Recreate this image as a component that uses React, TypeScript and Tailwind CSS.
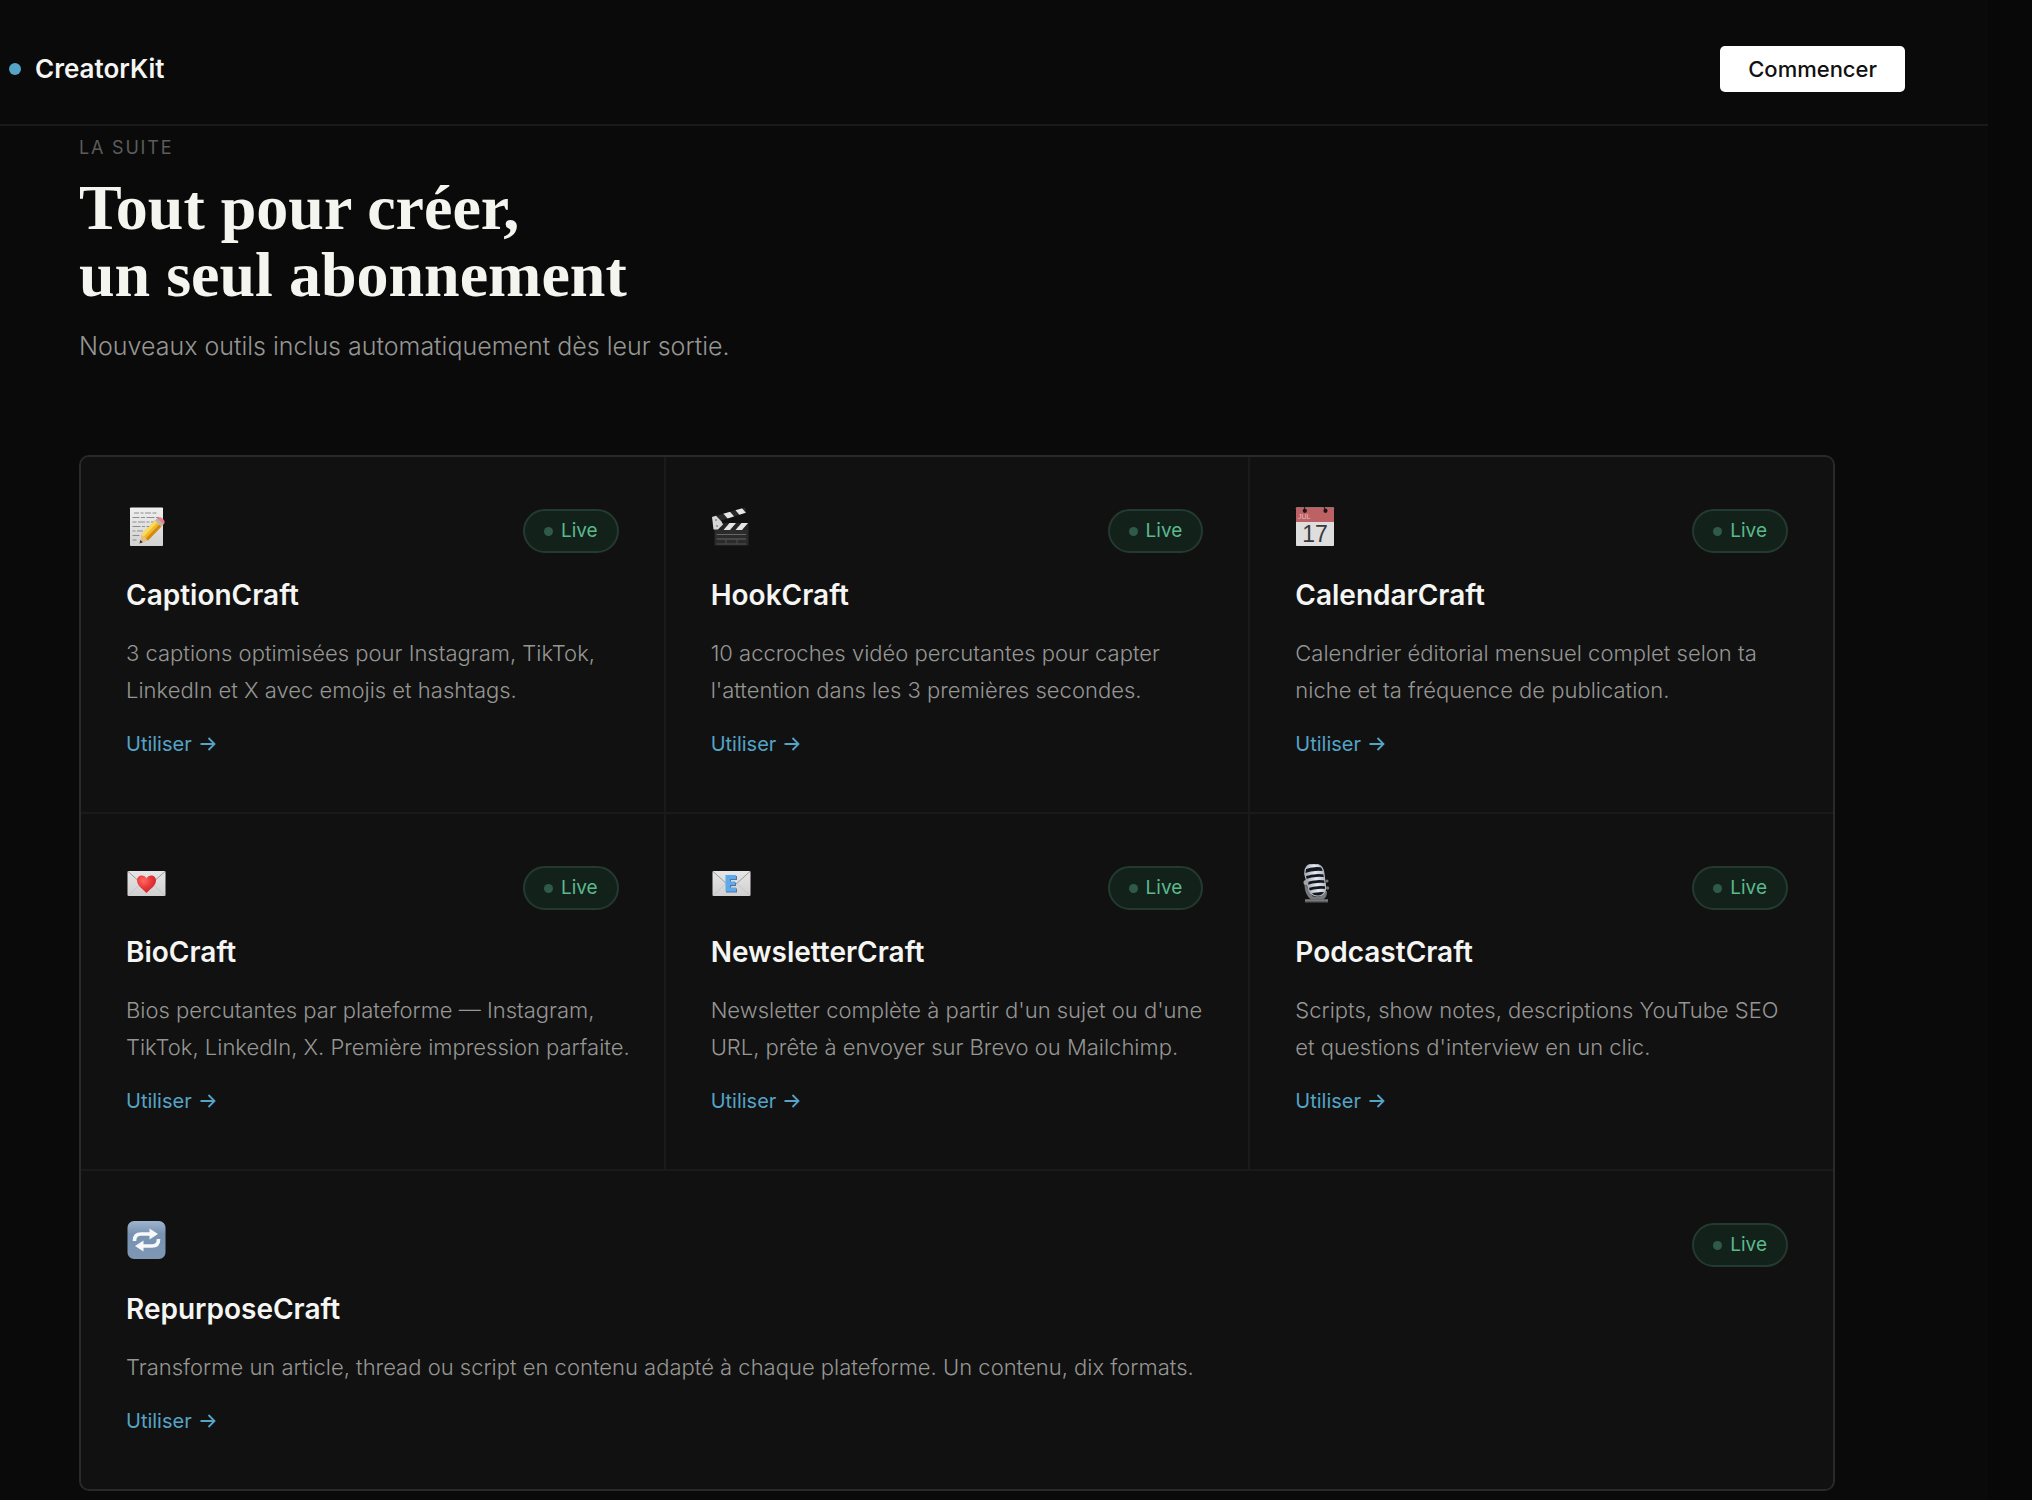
import type { ReactNode } from "react"

function MemoIcon() {
  return (
    <svg viewBox="0 0 40 40" className="h-10 w-10" aria-hidden="true">
      <defs>
        <linearGradient id="memo-paper" x1="0" y1="0" x2="0" y2="1">
          <stop offset="0" stopColor="#efefef" />
          <stop offset="1" stopColor="#d2d2d2" />
        </linearGradient>
      </defs>
      <rect x="4" y="0.5" width="33" height="38.5" rx="0.8" fill="url(#memo-paper)" />
      <g stroke="#8d8d8d" strokeWidth="1.1" fill="none">
        <path d="M8 6h5m1.500 0h3m1.500 0h6m1.500 0h4" />
        <path d="M6.500 10.500h7m1.500 0h4m1.500 0h8m1.500 0h3" />
        <path d="M6.500 15h4m1.500 0h7m1.500 0h3m1.500 0h5" />
        <path d="M6.500 19.500h8m1.500 0h3m1.500 0h4" />
        <path d="M6.500 24h3m1.500 0h6" />
        <path d="M6.500 28.500h7" />
        <path d="M6.500 33h4" />
      </g>
      <path d="M13.500 36.500l2-9 6.500 6z" fill="#e2bd86" />
      <path d="M13.500 36.500l.8-3.600 2.600 2.400z" fill="#333" />
      <path d="M15.500 27.500L29 13.500l6.500 6-13.500 14z" fill="#f2b92b" />
      <path d="M15.500 27.500L29 13.500l2.200 2-13.500 14z" fill="#fbdc55" />
      <path d="M19.800 31.500L33.300 17.500l2.200 2-13.500 14z" fill="#cf8a17" />
      <path d="M29 13.500l2-2 6.500 6-2 2z" fill="#b5b5b5" />
      <path d="M31 11.500c2-1.800 4-1.300 6 .500s2.200 4 .500 5.500z" fill="#ea7d85" />
    </svg>
  )
}

function ClapperIcon() {
  return (
    <svg viewBox="0 0 40 40" className="h-10 w-10" aria-hidden="true">
      <defs>
        <clipPath id="clap-top">
          <path d="M1 10L34 0.500l1.500 5L4 15.500z" />
        </clipPath>
        <clipPath id="clap-bottom">
          <path d="M3 16h34.500v7H3z" />
        </clipPath>
      </defs>
      <path d="M3.500 22.500h34v16h-34z" fill="#2c2b2b" />
      <path d="M1 10L34 0.500l1.500 5L4 15.500z" fill="#2a2a2a" />
      <g clipPath="url(#clap-top)" fill="#e6e6e6">
        <path d="M11 5l6.500-2 6 7-6.500 2z" />
        <path d="M23 1.500l6.500-2 6 7-6.500 2z" />
      </g>
      <path d="M3 16h34.500v7H3z" fill="#252525" />
      <g clipPath="url(#clap-bottom)" fill="#e6e6e6">
        <path d="M18.500 16h6.500l-6 7h-6.500z" />
        <path d="M30.500 16h6.500l-6 7h-6.500z" />
      </g>
      <path d="M1 10l4-1.200 5.500 5.700 1.500 3-5 5H2.500z" fill="#d7d7d7" />
      <circle cx="5" cy="13" r="1" fill="#888" />
      <circle cx="6" cy="19" r="1" fill="#888" />
      <path d="M5.500 27.500h29.500M5.500 32h29.500" stroke="#666" strokeWidth="1.2" />
      <path d="M15 32v4.500M26 32v4.500M5.500 37h29.500" stroke="#505050" strokeWidth="1" />
    </svg>
  )
}

function CalendarIcon() {
  return (
    <svg viewBox="0 0 40 40" className="h-10 w-10" aria-hidden="true">
      <rect x="1" y="0.500" width="38" height="38.500" rx="0.800" fill="#dedede" />
      <path d="M1 1.300q0-.8.8-.8h36.400q.8 0 .8.8V15H1z" fill="#bd6264" />
      <path d="M9.500 0v3M29 0l1.500 3" stroke="#3a1d1d" strokeWidth="1.200" />
      <circle cx="9.800" cy="3.800" r="2.100" fill="#1c1414" />
      <circle cx="30.500" cy="3.800" r="2.100" fill="#1c1414" />
      <text x="3" y="12" fontFamily="'Liberation Sans', sans-serif" fontSize="7" fill="#e8bcbc">
        JUL
      </text>
      <text x="20" y="35" textAnchor="middle" fontFamily="'Liberation Sans', sans-serif" fontSize="23" fill="#393939">
        17
      </text>
    </svg>
  )
}

function EnvelopeBase({ id, children }: { id: string; children: ReactNode }) {
  return (
    <svg viewBox="0 0 40 40" className="h-10 w-10" aria-hidden="true">
      <defs>
        <linearGradient id={id} x1="0" y1="0" x2="0" y2="1">
          <stop offset="0" stopColor="#e6e6e6" />
          <stop offset="1" stopColor="#d0d0d0" />
        </linearGradient>
      </defs>
      <rect x="1.500" y="7" width="38" height="25" rx="1" fill={`url(#${id})`} />
      <path d="M2 7.500L16.500 20.500q4 3 8 0L39 7.500" fill="none" stroke="#9b9b9b" strokeWidth="1" />
      <path d="M2 31.500L14.500 20M39 31.500L26.500 20" fill="none" stroke="#c0c0c0" strokeWidth="0.700" />
      {children}
    </svg>
  )
}

function LoveLetterIcon() {
  return (
    <EnvelopeBase id="love-paper">
      <defs>
        <radialGradient id="love-heart" cx="0.350" cy="0.300" r="0.800">
          <stop offset="0" stopColor="#ff6a62" />
          <stop offset="0.500" stopColor="#e9383a" />
          <stop offset="1" stopColor="#c3232b" />
        </radialGradient>
      </defs>
      <path
        d="M20.500 29C16.500 25 11 21.500 11 16.500c0-6 7.500-6.700 9.500-2 2-4.700 9.500-4 9.500 2C30 21.500 24.500 25 20.500 29z"
        fill="url(#love-heart)"
      />
    </EnvelopeBase>
  )
}

function EmailIcon() {
  return (
    <EnvelopeBase id="email-paper">
      <path d="M15 12h11v4h-6v2.500h5v3.500h-5v2.500h6v4H15z" fill="#56739c" />
      <path d="M14.500 11h10.500v4h-6v2.500h5v3.500h-5v2.500h6v4H14.500z" fill="#5fa8ec" />
    </EnvelopeBase>
  )
}

function MicIcon() {
  return (
    <svg viewBox="0 0 40 40" className="h-10 w-10" aria-hidden="true">
      <defs>
        <clipPath id="mic-head">
          <path d="M8 11C7 3 11 0 17 0s9 3 9.800 9l1.700 13c.7 6-2.500 10-7.500 10s-9-3-9.800-9z" />
        </clipPath>
        <linearGradient id="mic-metal" x1="0" y1="0" x2="1" y2="0">
          <stop offset="0" stopColor="#9aa0aa" />
          <stop offset="0.500" stopColor="#e6ecf6" />
          <stop offset="1" stopColor="#a5acb8" />
        </linearGradient>
      </defs>
      <g transform="translate(2 0)">
        <path d="M8 35.500h23v3H8z" fill="#5c5c5c" />
        <path d="M8 35.500h23v1.200H8z" fill="#8a8a8a" />
        <path d="M8 17c-1.500 7 1 15 6 18.500h12c3.500-2 4-5 4-8l-3-2-4 7h-7l-5-8z" fill="#74777b" />
        <g clipPath="url(#mic-head)">
          <path d="M6 0h25v33H6z" fill="#15171b" />
          <g stroke="url(#mic-metal)" strokeWidth="3.200" fill="none">
            <path d="M6 4.500q11-5 22-2" />
            <path d="M7 11q10-4 22-2" />
            <path d="M8 17q10-4 22-2" />
            <path d="M9 23q10-4 22-2" />
            <path d="M10 29q10-4 22-2" />
          </g>
        </g>
        <path
          d="M8 11C7 3 11 0 17 0s9 3 9.800 9l1.700 13c.7 6-2.500 10-7.500 10s-9-3-9.800-9z"
          fill="none"
          stroke="#b4bac3"
          strokeWidth="1.200"
        />
        <circle cx="9" cy="18.500" r="2.500" fill="#a3a5a8" />
        <circle cx="30" cy="17" r="1.500" fill="#777" />
        <circle cx="30.500" cy="24" r="1.700" fill="#777" />
      </g>
    </svg>
  )
}

function RepeatIcon() {
  return (
    <svg viewBox="0 0 40 40" className="h-10 w-10" aria-hidden="true">
      <defs>
        <linearGradient id="repeat-bg" x1="0" y1="0" x2="0" y2="1">
          <stop offset="0" stopColor="#9db4cd" />
          <stop offset="0.350" stopColor="#7892b2" />
          <stop offset="1" stopColor="#7f97b5" />
        </linearGradient>
      </defs>
      <rect x="1.500" y="0" width="38" height="38" rx="6.500" fill="url(#repeat-bg)" />
      <path d="M8.500 20v-.5q0-6.500 6.500-6.500h9.500" fill="none" stroke="#f6f8fa" strokeWidth="3.600" />
      <path d="M23.500 7.500l8.500 5.500-8.500 5.500z" fill="#f6f8fa" />
      <path d="M32.500 18v.5q0 6.500-6.500 6.500h-9.500" fill="none" stroke="#f6f8fa" strokeWidth="3.600" />
      <path d="M17.500 19.500L9 25l8.500 5.500z" fill="#f6f8fa" />
    </svg>
  )
}

const tools = [
  {
    name: "CaptionCraft",
    icon: <MemoIcon />,
    lines: ["3 captions optimisées pour Instagram, TikTok,", "LinkedIn et X avec emojis et hashtags."],
  },
  {
    name: "HookCraft",
    icon: <ClapperIcon />,
    lines: ["10 accroches vidéo percutantes pour capter", "l'attention dans les 3 premières secondes."],
  },
  {
    name: "CalendarCraft",
    icon: <CalendarIcon />,
    lines: ["Calendrier éditorial mensuel complet selon ta", "niche et ta fréquence de publication."],
  },
  {
    name: "BioCraft",
    icon: <LoveLetterIcon />,
    lines: ["Bios percutantes par plateforme — Instagram,", "TikTok, LinkedIn, X. Première impression parfaite."],
  },
  {
    name: "NewsletterCraft",
    icon: <EmailIcon />,
    lines: ["Newsletter complète à partir d'un sujet ou d'une", "URL, prête à envoyer sur Brevo ou Mailchimp."],
  },
  {
    name: "PodcastCraft",
    icon: <MicIcon />,
    lines: ["Scripts, show notes, descriptions YouTube SEO", "et questions d'interview en un clic."],
  },
  {
    name: "RepurposeCraft",
    icon: <RepeatIcon />,
    lines: ["Transforme un article, thread ou script en contenu adapté à chaque plateforme. Un contenu, dix formats."],
    wide: true,
  },
]

function LiveBadge() {
  return (
    <span className="flex h-11 items-center gap-2 rounded-full border-2 border-[#243a31] bg-[#13211b] px-[19px] text-[19px] text-[#5bb98c]">
      <span className="h-[9px] w-[9px] rounded-full bg-[#2f5a47]" />
      Live
    </span>
  )
}

function ToolCard({ name, icon, lines, wide }: { name: string; icon: ReactNode; lines: string[]; wide?: boolean }) {
  return (
    <article className={wide ? "col-span-3 bg-[#111111] px-[45px] pt-[50px] pb-[54px]" : "bg-[#111111] px-[45px] pt-[50px] pb-[54px]"}>
      <div className="flex h-12 items-center justify-between">
        <span className="self-start">{icon}</span>
        <LiveBadge />
      </div>
      <h3 className="mt-6 text-[28px] leading-8 font-semibold text-[#f5f5f3]">{name}</h3>
      <p className="mt-6 text-[22px] leading-[37px] font-light whitespace-nowrap text-[#969693]">
        {lines.map((line) => (
          <span key={line} className="block">
            {line}
          </span>
        ))}
      </p>
      <a href="#" className="mt-[21px] inline-flex items-center gap-2 text-[20px] leading-7 text-[#55a3c7]">
        Utiliser
        <svg viewBox="0 0 16 16" className="h-4 w-4" fill="none" stroke="currentColor" strokeWidth="1.800" aria-hidden="true">
          <path d="M0.500 8h13.500M8.500 2l6 6-6 6" />
        </svg>
      </a>
    </article>
  )
}

export default function App() {
  return (
    <div className="min-h-screen bg-[#080808] pr-11 font-['Inter',sans-serif]">
      <div className="min-h-screen bg-[#0a0a0a]">
        <nav className="flex items-center justify-between border-b-2 border-[#1a1a1a] pt-[46px] pr-[83px] pb-8 pl-[9px]">
          <a href="#" className="flex items-center gap-3.5 text-[26px] leading-8 font-semibold text-[#f5f5f3]">
            <span className="h-3 w-3 rounded-full bg-[#55a3c7]" />
            CreatorKit
          </a>
          <button type="button" className="h-[46px] rounded-[5px] bg-white px-7 text-[22px] leading-7 font-medium text-[#111111]">
            Commencer
          </button>
        </nav>

        <main className="pt-2 pr-[153px] pb-2 pl-[79px]">
          <p className="text-[18px] leading-7 tracking-widest text-[#5c5c5a] uppercase">La suite</p>
          <h1 className="mt-3 font-['Liberation_Serif',serif] text-[64px] leading-[67px] font-bold text-[#f5f5f0]">
            Tout pour créer,
            <br />
            un seul abonnement
          </h1>
          <p className="mt-5 text-[25px] leading-9 font-light text-[#969693]">
            Nouveaux outils inclus automatiquement dès leur sortie.
          </p>

          <section className="mt-[91px] grid grid-cols-3 gap-0.5 overflow-hidden rounded-[10px] border-2 border-[#2a2a2a] bg-[#1a1a1a]">
            {tools.map((tool) => (
              <ToolCard key={tool.name} {...tool} />
            ))}
          </section>
        </main>
      </div>
    </div>
  )
}
